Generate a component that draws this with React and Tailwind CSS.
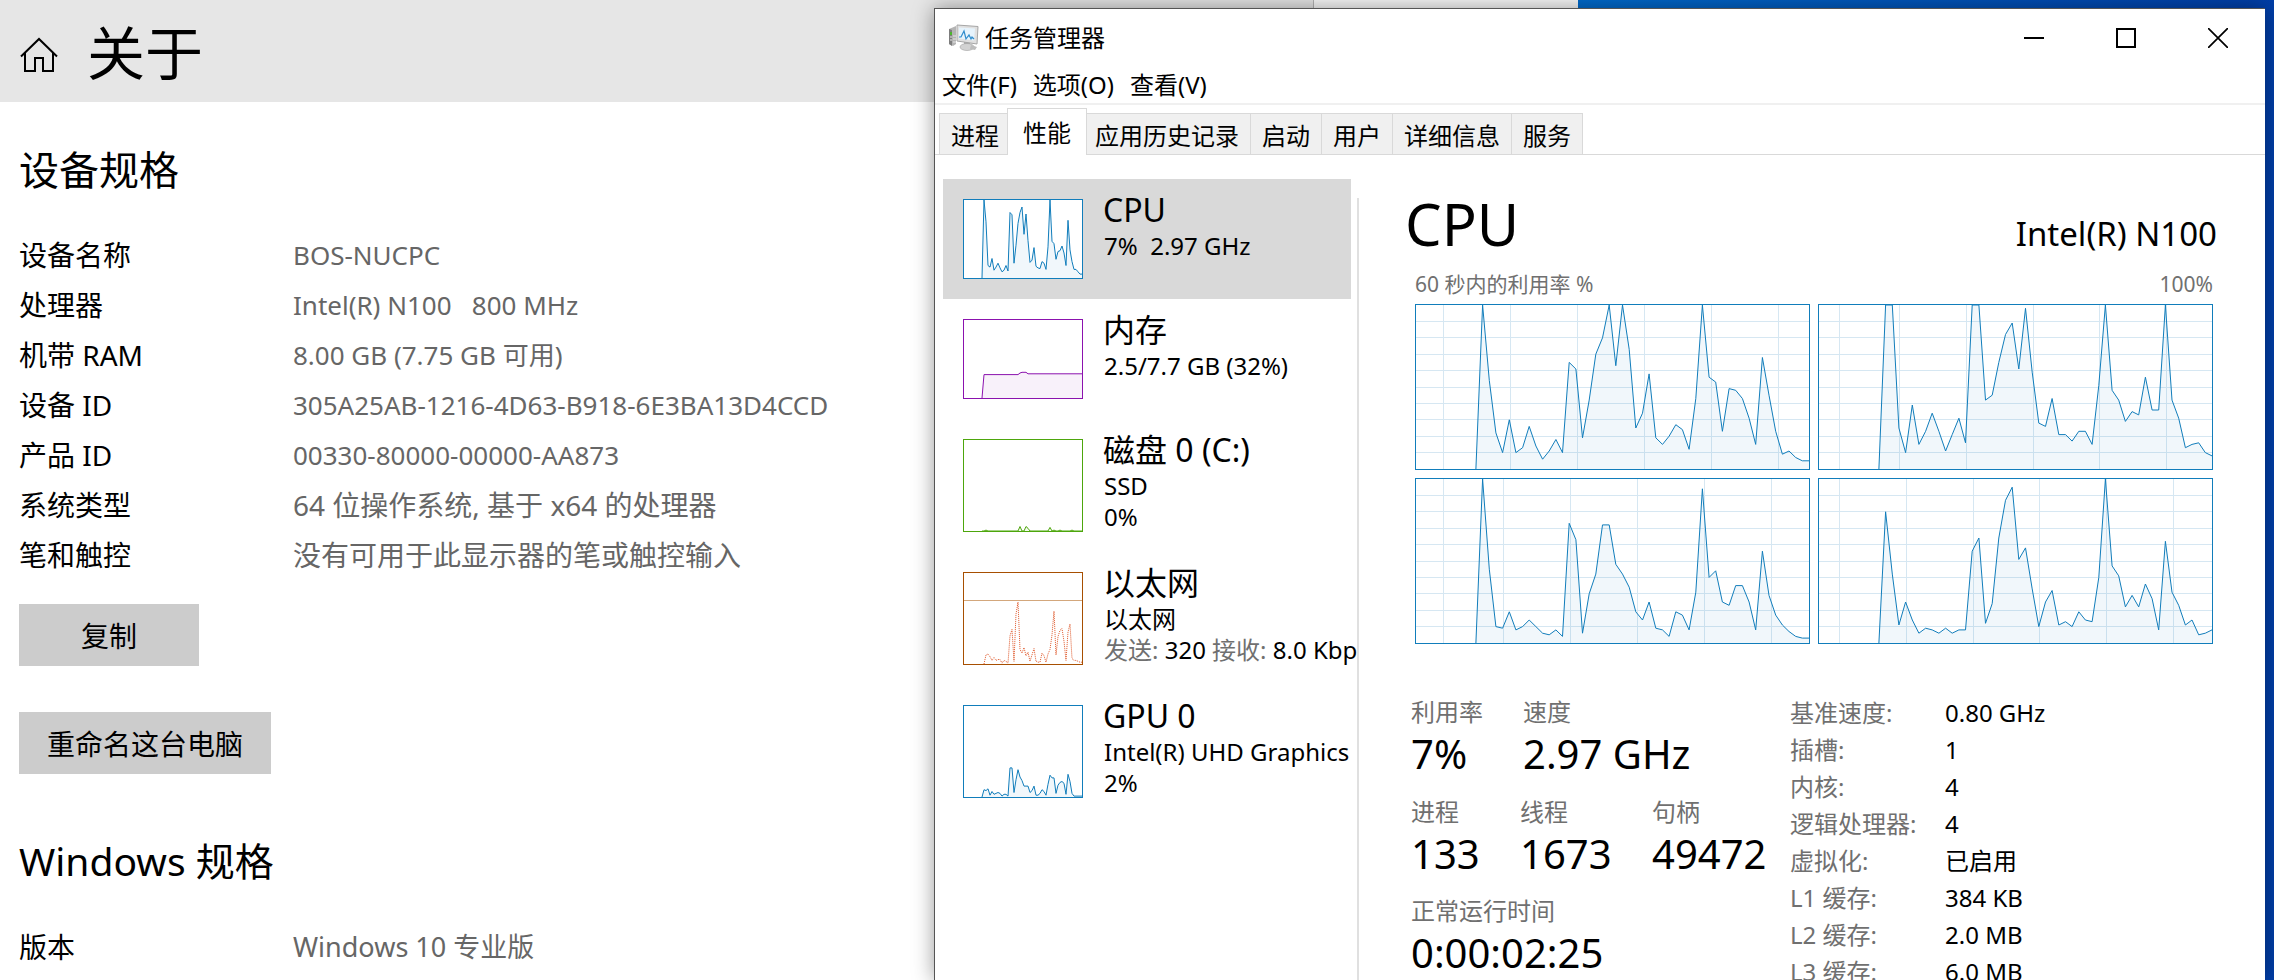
const SPECS = [
  { label: '设备名称', value: 'BOS-NUCPC', latin: true },
  { label: '处理器', value: 'Intel(R) N100\u00a0\u00a0 800 MHz', latin: true },
  { label: '机带 RAM', value: '8.00 GB (7.75 GB 可用)', latin: true },
  { label: '设备 ID', value: '305A25AB-1216-4D63-B918-6E3BA13D4CCD', latin: true },
  { label: '产品 ID', value: '00330-80000-00000-AA873', latin: true },
  { label: '系统类型', value: '64 位操作系统, 基于 x64 的处理器' },
  { label: '笔和触控', value: '没有可用于此显示器的笔或触控输入' },
];

const MENUS = ['文件(F)', '选项(O)', '查看(V)'];
const TABS = ['进程', '性能', '应用历史记录', '启动', '用户', '详细信息', '服务'];

const DETAILS = [
  ['基准速度:', '0.80 GHz'],
  ['插槽:', '1'],
  ['内核:', '4'],
  ['逻辑处理器:', '4'],
  ['虚拟化:', '已启用'],
  ['L1 缓存:', '384 KB'],
  ['L2 缓存:', '2.0 MB'],
  ['L3 缓存:', '6.0 MB'],
];

// One sample per second, oldest first. The last sample sits on the right edge.
const CORES = [
  {
    grid: [27, 94, 161, 228, 295, 362],
    samples: [0, 100, 54, 22, 10, 30, 10, 13, 26, 14, 6, 11, 18, 10, 65, 61, 19, 42, 70, 80, 100, 63, 100, 73, 25, 34, 58, 19, 15, 20, 27, 24, 12, 43, 100, 56, 53, 23, 49, 48, 43, 31, 15, 68, 45, 23, 9, 11, 7, 5, 5],
  },
  {
    grid: [20, 80, 147, 214, 280, 347],
    samples: [0, 100, 100, 25, 10, 39, 15, 23, 34, 23, 11, 21, 31, 16, 100, 100, 42, 45, 65, 82, 89, 61, 98, 59, 28, 26, 43, 21, 21, 17, 23, 23, 15, 51, 100, 48, 42, 29, 35, 33, 56, 36, 36, 100, 42, 31, 13, 15, 16, 10, 8],
  },
  {
    grid: [27, 87, 154, 221, 288, 355],
    samples: [0, 100, 45, 10, 9, 19, 8, 10, 14, 10, 6, 5, 8, 4, 73, 63, 6, 30, 42, 72, 72, 48, 42, 34, 19, 14, 25, 9, 8, 4, 19, 17, 8, 31, 94, 40, 44, 25, 23, 35, 35, 25, 8, 56, 29, 17, 11, 7, 4, 3, 3],
  },
  {
    grid: [20, 87, 154, 220, 287, 354],
    samples: [0, 80, 42, 11, 25, 14, 6, 9, 8, 6, 9, 6, 8, 8, 56, 64, 12, 24, 64, 87, 95, 51, 58, 33, 10, 25, 32, 11, 13, 10, 19, 14, 13, 40, 100, 47, 41, 22, 29, 22, 36, 27, 8, 62, 31, 23, 11, 14, 5, 6, 8],
  },
];

const CPU = [0, 100, 72, 16, 14, 25, 10, 14, 19, 13, 8, 10, 16, 9, 84, 81, 19, 42, 70, 84, 91, 56, 82, 48, 20, 23, 39, 15, 13, 12, 21, 19, 11, 40, 100, 47, 44, 24, 34, 35, 41, 32, 16, 74, 36, 21, 11, 11, 8, 5, 5];
const MEMORY = [0, ...Array(18).fill(30), 32, 33, 33, 33, ...Array(28).fill(31)];
const DISK = [0, 0, 1, 0, 0, 0, 0, 0, 0, 0, 0, 0, 0, 0, 0, 0, 0, 0, 0, 5, 0, 0, 5, 3, 0, 0, 0, 0, 0, 0, 0, 0, 0, 0, 4, 0, 1, 0, 0, 1, 0, 0, 0, 0, 0, 1, 0, 0, 0, 0, 0];
const ETHERNET = [0, 10, 11, 8, 4, 7, 4, 5, 5, 1, 4, 3, 1, 31, 38, 3, 55, 68, 16, 12, 18, 9, 13, 3, 10, 17, 3, 2, 2, 12, 9, 2, 11, 16, 32, 58, 10, 30, 37, 39, 25, 4, 35, 44, 6, 4, 4, 3, 2, 2];
const GPU = [0, 8, 7, 9, 2, 6, 3, 4, 5, 4, 1, 3, 3, 1, 32, 32, 5, 19, 30, 22, 18, 12, 12, 12, 5, 7, 12, 2, 2, 4, 8, 6, 2, 14, 24, 21, 21, 4, 13, 16, 17, 15, 3, 25, 17, 4, 1, 1, 1, 1, 1];

function HistoryChart({ samples, width, height, color, grid = [], dashed = false, limit }) {
  const first = 60 - samples.length;
  const points = samples
    .map((v, i) => `${(((first + i) * width) / 59).toFixed(1)},${(height - (v * height) / 100).toFixed(1)}`)
    .join(' ');
  const startX = ((first * width) / 59).toFixed(1);

  return (
    <svg className="block h-full w-full" viewBox={`0 0 ${width} ${height}`} preserveAspectRatio="none" aria-hidden="true">
      {grid.length > 0 && (
        <g stroke="#d6e7f2" shapeRendering="crispEdges">
          {grid.map((x) => (
            <line key={x} x1={x} x2={x} y1="0" y2={height} />
          ))}
          {[1, 2, 3, 4, 5, 6, 7, 8, 9].map((n) => (
            <line key={n} x1="0" x2={width} y1={(n * height) / 10} y2={(n * height) / 10} />
          ))}
        </g>
      )}
      {limit && <line x1="0" x2={width} y1={limit} y2={limit} stroke="#d3a77c" shapeRendering="crispEdges" />}
      {!dashed && <polygon points={`${startX},${height} ${points} ${width},${height}`} fill={color} fillOpacity="0.06" />}
      <polyline
        points={points}
        fill="none"
        stroke={color}
        strokeDasharray={dashed ? '1 1' : undefined}
        vectorEffect="non-scaling-stroke"
      />
    </svg>
  );
}

function HomeIcon() {
  return (
    <svg className="h-9 w-10 shrink-0" viewBox="0 0 40 36" fill="none" stroke="#000" strokeWidth="2" aria-hidden="true">
      <path d="M2 19.500 20 2l18 17.500" />
      <path d="M6 16v18h10V21h8v13h10V16" />
    </svg>
  );
}

function TaskManagerIcon() {
  return (
    <svg className="h-7 w-[30px] shrink-0" viewBox="0 0 30 28" aria-hidden="true">
      <path d="M0 5l7-3v18l-3 2-4-2z" fill="#b4b4b4" />
      <path d="M0 5l3 1v16l-3-2z" fill="#7d7d7d" />
      <path d="M1 8h2v3H1z" fill="#4bb52c" />
      <path d="M1 13h2M1 16h2M4 12h3M4 15h3M4 18h3" stroke="#e6e6e6" />
      <path d="M8 1l21 1.500-1 17.500-20-3z" fill="#e0e0e0" stroke="#a6a6a6" />
      <path d="M10 3.500l16 1-1 12-15-2z" fill="#e6f3fc" />
      <path d="M10 13h2l3-6 2 8 3-4 2 4 1-2 2 2" fill="none" stroke="#2f8ccc" strokeWidth="1.200" />
      <path d="M15 18l6 1v3h-6z" fill="#a5a5a5" />
      <ellipse cx="18" cy="23" rx="7" ry="3.500" fill="#d2d2d2" stroke="#a0a0a0" strokeWidth=".6" />
      <path d="M22 21l6 2-2 3-5-1z" fill="#bdbdbd" />
    </svg>
  );
}

function SettingsWindow() {
  return (
    <section className="absolute inset-y-0 left-0 w-[1314px] border-r border-[#b4b4b4] bg-white">
      <header className="flex h-[102px] items-center gap-7 bg-[#e6e6e6] pl-[19px]">
        <button type="button" aria-label="主页" className="pt-2">
          <HomeIcon />
        </button>
        <h1 className="pt-1 text-[58px] leading-[98px]">关于</h1>
      </header>

      <div className="pl-[19px]">
        <h2 className="pt-10 text-[40px] leading-[56px]">设备规格</h2>
        <dl className="mt-8 grid grid-cols-[274px_1fr] text-[28px] leading-[50px]">
          {SPECS.map((row) => (
            <div key={row.label} className="contents">
              <dt>{row.label}</dt>
              <dd className={row.latin ? 'text-[26px] text-[#666]' : 'text-[#666]'}>{row.value}</dd>
            </div>
          ))}
        </dl>
        <button type="button" className="mt-6 block h-[62px] w-[180px] bg-[#ccc] pt-0.5 text-[28px]">
          复制
        </button>
        <button type="button" className="mt-[46px] block h-[62px] w-[252px] bg-[#ccc] pt-0.5 text-[28px]">
          重命名这台电脑
        </button>
        <h2 className="mt-[59px] text-[39px] leading-[56px]">Windows 规格</h2>
        <dl className="mt-[33px] grid grid-cols-[274px_1fr] text-[28px] leading-[50px]">
          <dt>版本</dt>
          <dd className="text-[27px] text-[#666]">Windows 10 专业版</dd>
        </dl>
      </div>
    </section>
  );
}

function TitleBar() {
  return (
    <header className="flex h-[58px] shrink-0 items-center pr-px pl-[14px]">
      <TaskManagerIcon />
      <h2 className="ml-[6px] flex-1 text-[24px] leading-[58px]">任务管理器</h2>
      <button type="button" aria-label="最小化" className="flex h-full w-[92px] items-center justify-center">
        <span className="h-[2px] w-5 bg-black" />
      </button>
      <button type="button" aria-label="最大化" className="flex h-full w-[92px] items-center justify-center">
        <span className="h-5 w-5 border-2 border-black" />
      </button>
      <button type="button" aria-label="关闭" className="flex h-full w-[92px] items-center justify-center">
        <svg className="h-5 w-5" viewBox="0 0 20 20" stroke="#000" strokeWidth="1.700" aria-hidden="true">
          <path d="M0 0l20 20M20 0L0 20" />
        </svg>
      </button>
    </header>
  );
}

function TabBar() {
  return (
    <div role="tablist" className="flex h-[50px] shrink-0 items-end border-b border-[#d9d9d9] pl-1 text-[24px]">
      {TABS.map((tab) =>
        tab === '性能' ? (
          <button
            key={tab}
            type="button"
            role="tab"
            aria-selected="true"
            className="relative -mx-[3px] -mb-px h-[47px] border border-b-0 border-[#d9d9d9] bg-white px-[15px] leading-[45px]"
          >
            {tab}
          </button>
        ) : (
          <button
            key={tab}
            type="button"
            role="tab"
            aria-selected="false"
            className="h-[41px] border-t border-r border-[#d9d9d9] bg-[#f0f0f0] px-[11px] leading-[44px] first:border-r-0 first:border-l"
          >
            {tab}
          </button>
        )
      )}
    </div>
  );
}

function ResourceItem({ title, lines, border, tall, active, chart }) {
  return (
    <button
      type="button"
      className={`flex w-full items-start gap-5 pl-5 text-left ${active ? 'bg-[#d9d9d9]' : ''} ${tall ? 'h-[133px]' : 'h-[120px]'}`}
    >
      <span className={`mt-5 w-[120px] shrink-0 border bg-white ${border} ${tall ? 'h-[93px]' : 'h-20'}`}>
        <HistoryChart width={118} height={tall ? 91 : 78} {...chart} />
      </span>
      <span className="pt-[10px] text-[24px] leading-[31px] whitespace-nowrap">
        <span className="block text-[32px] leading-[41px]">{title}</span>
        {lines.map((line, i) => (
          <span key={i} className="block pl-px">{line}</span>
        ))}
      </span>
    </button>
  );
}

function Sidebar() {
  return (
    <nav className="mt-6 w-[414px] shrink-0 overflow-hidden">
      <div className="w-[408px]">
        <ResourceItem title="CPU" active lines={['7%\u00a0 2.97 GHz']} border="border-[#117dbb]" chart={{ samples: CPU, color: '#117dbb' }} />
        <ResourceItem title="内存" lines={['2.5/7.7 GB (32%)']} border="border-[#8b12ae]" chart={{ samples: MEMORY, color: '#8b12ae' }} />
        <ResourceItem title="磁盘 0 (C:)" tall lines={['SSD', '0%']} border="border-[#4da60c]" chart={{ samples: DISK, color: '#4da60c' }} />
        <ResourceItem
          title="以太网"
          tall
          lines={[
            '以太网',
            <>
              <span className="text-[#707070]">发送:</span> 320 <span className="text-[#707070]">接收:</span> 8.0 Kbps
            </>,
          ]}
          border="border-[#a74f01]"
          chart={{ samples: ETHERNET, color: '#e0582a', dashed: true, limit: 27 }}
        />
        <ResourceItem title="GPU 0" tall lines={['Intel(R) UHD Graphics', '2%']} border="border-[#117dbb]" chart={{ samples: GPU, color: '#117dbb' }} />
      </div>
    </nav>
  );
}

function Stat({ label, value, className = '' }) {
  return (
    <div className={className}>
      <dt className="text-[24px] leading-[36px] text-[#707070]">{label}</dt>
      <dd className="text-[40px] leading-[48px]">{value}</dd>
    </div>
  );
}

function CpuPanel() {
  return (
    <main className="mt-[43px] min-w-0 flex-1 border-l-2 border-[#e0e0e0] pr-12 pl-[46px]">
      <div className="flex items-end justify-between">
        <h1 className="text-[58px] leading-[52px]">CPU</h1>
        <p className="text-[33px] leading-[32px]">Intel(R) N100</p>
      </div>
      <div className="mt-[18px] flex justify-between pr-1 pb-1 pl-[10px] text-[21px] leading-8 text-[#707070]">
        <span>60 秒内的利用率 %</span>
        <span>100%</span>
      </div>
      <div className="grid grid-cols-2 gap-2 pr-1 pl-[10px]">
        {CORES.map((core, i) => (
          <div key={i} className="h-[166px] border border-[#117dbb]">
            <HistoryChart samples={core.samples} grid={core.grid} width={393} height={164} color="#117dbb" />
          </div>
        ))}
      </div>

      <div className="mt-[50px] flex pl-[6px]">
        <dl className="w-[379px] shrink-0">
          <div className="flex">
            <Stat className="w-[112px]" label="利用率" value="7%" />
            <Stat label="速度" value="2.97 GHz" />
          </div>
          <div className="mt-4 flex">
            <Stat className="w-[109px]" label="进程" value="133" />
            <Stat className="w-[132px]" label="线程" value="1673" />
            <Stat label="句柄" value="49472" />
          </div>
          <Stat className="mt-[15px]" label="正常运行时间" value="0:00:02:25" />
        </dl>
        <dl className="grid grid-cols-[155px_1fr] text-[24px] leading-[37px] whitespace-nowrap">
          {DETAILS.map(([label, value]) => (
            <div key={label} className="contents">
              <dt className="text-[#707070]">{label}</dt>
              <dd>{value}</dd>
            </div>
          ))}
        </dl>
      </div>
    </main>
  );
}

function TaskManagerWindow() {
  return (
    <section className="absolute top-2 right-[9px] bottom-0 left-[934px] flex flex-col overflow-hidden border-t border-l border-[#555] bg-white shadow-[0_0_20px_rgba(0,0,0,0.4)]">
      <TitleBar />
      <nav className="flex h-[38px] shrink-0 items-center gap-4 border-b-2 border-[#f0f0f0] pl-[7px] text-[24px]">
        {MENUS.map((menu) => (
          <button key={menu} type="button">{menu}</button>
        ))}
      </nav>
      <TabBar />
      <div className="flex flex-1 pl-2">
        <Sidebar />
        <CpuPanel />
      </div>
    </section>
  );
}

export default function App() {
  return (
    <div className="relative h-screen overflow-hidden bg-linear-to-r from-[#0078d7] from-60% to-[#003ea8] font-['Noto_Sans','Noto_Sans_CJK_SC',sans-serif] text-black">
      <div className="absolute inset-y-0 left-0 w-[1578px] bg-[#f9f9f9]" />
      <SettingsWindow />
      <TaskManagerWindow />
    </div>
  );
}
